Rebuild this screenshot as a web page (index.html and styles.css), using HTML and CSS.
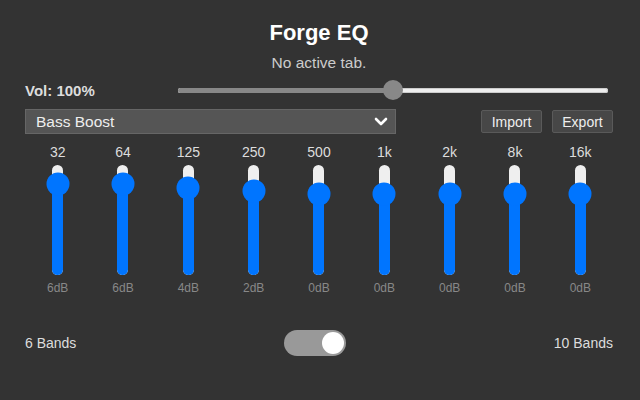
FILE: index.html
```html
<!DOCTYPE html>
<html lang="en">
<head>
  <meta charset="utf-8" />
  <title>Forge EQ</title>
  <meta name="viewport" content="width=device-width, initial-scale=1.0" />
  <link rel="stylesheet" href="styles.css">
</head>

<body>
  <div class="app">
    <h1 class="title">Forge EQ</h1>
    <div class="status">No active tab.</div>

    <div class="vol-row">
      <span class="vol-label">Vol: 100%</span>
      <div class="range">
        <div class="range-track"></div>
        <div class="range-fill" style="width: 50%"></div>
        <div class="range-thumb" style="left: 50%"></div>
      </div>
    </div>

    <div class="preset-row">
      <div class="select">
        <span>Bass Boost</span>
        <svg class="chevron" width="14" height="9" viewBox="0 0 14 9">
          <path d="M2 2 L7 7 L12 2" fill="none" stroke="#fff" stroke-width="2.6" stroke-linecap="round" stroke-linejoin="round" />
        </svg>
      </div>
      <div class="buttons">
        <button class="btn">Import</button>
        <button class="btn">Export</button>
      </div>
    </div>

    <div class="bands">
      <div class="band" style="--y: 19px">
        <div class="freq">32</div>
        <div class="slider"><div class="fill"></div><div class="thumb"></div></div>
        <div class="gain">6dB</div>
      </div>
      <div class="band" style="--y: 19px">
        <div class="freq">64</div>
        <div class="slider"><div class="fill"></div><div class="thumb"></div></div>
        <div class="gain">6dB</div>
      </div>
      <div class="band" style="--y: 23px">
        <div class="freq">125</div>
        <div class="slider"><div class="fill"></div><div class="thumb"></div></div>
        <div class="gain">4dB</div>
      </div>
      <div class="band" style="--y: 26px">
        <div class="freq">250</div>
        <div class="slider"><div class="fill"></div><div class="thumb"></div></div>
        <div class="gain">2dB</div>
      </div>
      <div class="band" style="--y: 29px">
        <div class="freq">500</div>
        <div class="slider"><div class="fill"></div><div class="thumb"></div></div>
        <div class="gain">0dB</div>
      </div>
      <div class="band" style="--y: 29px">
        <div class="freq">1k</div>
        <div class="slider"><div class="fill"></div><div class="thumb"></div></div>
        <div class="gain">0dB</div>
      </div>
      <div class="band" style="--y: 29px">
        <div class="freq">2k</div>
        <div class="slider"><div class="fill"></div><div class="thumb"></div></div>
        <div class="gain">0dB</div>
      </div>
      <div class="band" style="--y: 29px">
        <div class="freq">8k</div>
        <div class="slider"><div class="fill"></div><div class="thumb"></div></div>
        <div class="gain">0dB</div>
      </div>
      <div class="band" style="--y: 29px">
        <div class="freq">16k</div>
        <div class="slider"><div class="fill"></div><div class="thumb"></div></div>
        <div class="gain">0dB</div>
      </div>
    </div>

    <div class="footer">
      <span class="bands-label">6 Bands</span>
      <div class="toggle on"><div class="knob"></div></div>
      <span class="bands-label">10 Bands</span>
    </div>
  </div>
</body>
</html>
```

FILE: styles.css
```css
html, body {
  margin: 0;
  padding: 0;
  height: 100%;
  background-color: #333;
  font-family: "Liberation Sans", Arial, sans-serif;
  color: #ddd;
}

.app {
  padding: 20px 27px 0 25px;
}

.title {
  margin: 0;
  font-size: 22px;
  line-height: 26px;
  font-weight: bold;
  color: #fff;
  text-align: center;
}

.status {
  margin-top: 8px;
  font-size: 15.5px;
  line-height: 18px;
  color: #ccc;
  text-align: center;
}

/* Volume */
.vol-row {
  display: flex;
  align-items: center;
  height: 22px;
  margin-top: 7px;
}

.vol-label {
  flex: 0 0 153px;
  font-size: 15px;
  font-weight: bold;
  color: #ddd;
}

.range {
  position: relative;
  flex: 1;
  height: 20px;
  margin-right: 5px;
}

.range-track {
  position: absolute;
  left: 0;
  right: 0;
  top: 8px;
  height: 5px;
  border-radius: 3px;
  background-color: #eee;
  box-shadow: inset 0 0 0 1px #ccc;
}

.range-fill {
  position: absolute;
  left: 0;
  top: 8px;
  height: 5px;
  border-radius: 3px 0 0 3px;
  background-color: #888;
}

.range-thumb {
  position: absolute;
  top: 0;
  width: 20px;
  height: 20px;
  margin-left: -10px;
  border-radius: 50%;
  background-color: #888;
}

/* Preset */
.preset-row {
  display: flex;
  align-items: center;
  height: 25px;
  margin-top: 8px;
}

.select {
  box-sizing: border-box;
  display: flex;
  align-items: center;
  justify-content: space-between;
  width: 371px;
  height: 25px;
  padding: 0 7px 0 10px;
  background-color: #555;
  border: 1px solid #666;
  font-size: 15.5px;
  color: #eee;
}

.chevron {
  display: block;
}

.buttons {
  display: flex;
  gap: 10px;
  margin-left: auto;
}

.btn {
  box-sizing: border-box;
  height: 23px;
  width: 61px;
  padding: 0;
  background-color: #474747;
  border: 1px solid #5a5a5a;
  border-radius: 2px;
  color: #eee;
  font-family: "Liberation Sans", Arial, sans-serif;
  font-size: 14px;
}

/* Bands */
.bands {
  display: grid;
  grid-template-columns: repeat(9, 1fr);
  margin-top: 10px;
}

.band {
  display: flex;
  flex-direction: column;
  align-items: center;
}

.freq {
  font-size: 14px;
  line-height: 16px;
  color: #ddd;
}

.slider {
  position: relative;
  width: 11px;
  height: 110px;
  margin-top: 5px;
  border-radius: 6px;
  background-color: #efefef;
}

.slider .fill {
  position: absolute;
  left: 0;
  right: 0;
  top: var(--y);
  bottom: 0;
  border-radius: 0 0 6px 6px;
  background-color: #0075ff;
}

.slider .thumb {
  position: absolute;
  left: 50%;
  top: var(--y);
  width: 23px;
  height: 23px;
  transform: translate(-50%, -50%);
  border-radius: 50%;
  background-color: #0075ff;
}

.gain {
  margin-top: 6px;
  font-size: 12px;
  line-height: 14px;
  color: #888;
}

/* Footer */
.footer {
  display: flex;
  justify-content: space-between;
  align-items: center;
  margin-top: 35px;
}

.bands-label {
  font-size: 14px;
  color: #ddd;
}

.toggle {
  position: relative;
  box-sizing: border-box;
  width: 62px;
  height: 26px;
  border-radius: 13px;
  background-color: #999;
}

.toggle .knob {
  position: absolute;
  top: 2px;
  left: 2px;
  width: 22px;
  height: 22px;
  border-radius: 50%;
  background-color: #fff;
}

.toggle.on .knob {
  left: 38px;
}
```
